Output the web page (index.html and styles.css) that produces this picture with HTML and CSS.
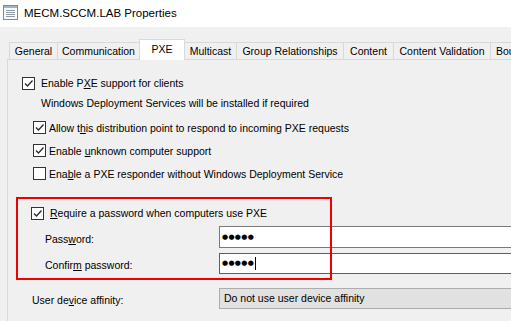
FILE: index.html
```html
<!DOCTYPE html>
<html>
<head>
<meta charset="utf-8">
<link rel="stylesheet" href="styles.css">
</head>
<body>
<div class="window">
  <div class="titlebar">
    <svg class="app-icon" width="15" height="15" viewBox="0 0 15 15">
      <rect x="0.5" y="0.5" width="14" height="14" fill="#fdfdfd" stroke="#7c8a99"/>
      <rect x="1" y="1" width="13" height="2" fill="#9fb4c8"/>
      <rect x="3" y="5" width="9" height="1" fill="#8e9aa6"/>
      <rect x="3" y="7" width="9" height="1" fill="#8e9aa6"/>
      <rect x="3" y="9" width="9" height="1" fill="#8e9aa6"/>
      <rect x="3" y="11" width="9" height="1" fill="#8e9aa6"/>
    </svg>
    <span class="title">MECM.SCCM.LAB Properties</span>
  </div>

  <div class="tabs">
    <div class="tab t-general">General</div>
    <div class="tab t-comm">Communication</div>
    <div class="tab t-pxe selected">PXE</div>
    <div class="tab t-multi">Multicast</div>
    <div class="tab t-group">Group Relationships</div>
    <div class="tab t-content">Content</div>
    <div class="tab t-cv">Content Validation</div>
    <div class="tab t-bound">Boundary Groups</div>
  </div>

  <div class="panel">
    <label class="row row-main">
      <span class="cb checked"><svg viewBox="0 0 11 11" width="11" height="11"><path d="M2 5.5 L4.5 8 L9.5 2.5" fill="none" stroke="#2b2b2b" stroke-width="1.3"/></svg></span>
      <span class="lbl">Enable P<u>X</u>E support for clients</span>
    </label>
    <div class="note">Windows Deployment Services will be installed if required</div>
    <label class="row row-sub">
      <span class="cb checked"><svg viewBox="0 0 11 11" width="11" height="11"><path d="M2 5.5 L4.5 8 L9.5 2.5" fill="none" stroke="#2b2b2b" stroke-width="1.3"/></svg></span>
      <span class="lbl">Allow t<u>h</u>is distribution point to respond to incoming PXE requests</span>
    </label>
    <label class="row row-sub">
      <span class="cb checked"><svg viewBox="0 0 11 11" width="11" height="11"><path d="M2 5.5 L4.5 8 L9.5 2.5" fill="none" stroke="#2b2b2b" stroke-width="1.3"/></svg></span>
      <span class="lbl">Enable <u>u</u>nknown computer support</span>
    </label>
    <label class="row row-sub">
      <span class="cb"></span>
      <span class="lbl">Ena<u>b</u>le a PXE responder without Windows Deployment Service</span>
    </label>

    <div class="pw-group">
      <label class="row row-pw">
        <span class="cb checked"><svg viewBox="0 0 11 11" width="11" height="11"><path d="M2 5.5 L4.5 8 L9.5 2.5" fill="none" stroke="#2b2b2b" stroke-width="1.3"/></svg></span>
        <span class="lbl"><u>R</u>equire a password when computers use PXE</span>
      </label>
      <div class="field">
        <span class="field-lbl">Pass<u>w</u>ord:</span>
        <div class="textbox"><span class="dots">●●●●●</span></div>
      </div>
      <div class="field field-confirm">
        <span class="field-lbl">Confir<u>m</u> password:</span>
        <div class="textbox focused"><span class="dots">●●●●●</span><span class="caret"></span></div>
      </div>
      <div class="highlight"></div>
    </div>

    <div class="field affinity">
      <span class="field-lbl">User de<u>v</u>ice affinity:</span>
      <div class="combo">Do not use user device affinity</div>
    </div>
  </div>
</div>
</body>
</html>
```

FILE: styles.css
```css
html, body {
  margin: 0;
  padding: 0;
  width: 511px;
  height: 321px;
  overflow: hidden;
  background: #f0f0f0;
}

.window {
  font-family: "Liberation Sans", Arial, sans-serif;
  font-size: 10.5px;
  color: #000;
  width: 511px;
  height: 321px;
  overflow: hidden;
}

u { text-decoration: underline; text-underline-offset: 1px; }

.titlebar {
  height: 27px;
  background: #fff;
  display: flex;
  align-items: center;
  padding-left: 3px;
  box-sizing: border-box;
  padding-bottom: 2px;
}

.app-icon { display: block; flex: none; }

.title {
  font-size: 11.5px;
  margin-left: 6px;
  color: #000;
}

.tabs {
  display: flex;
  align-items: flex-end;
  height: 20px;
  margin-top: 12px;
  padding-left: 9px;
  width: 700px;
}

.tab {
  box-sizing: border-box;
  flex: none;
  height: 17px;
  border: 1px solid #d9d9d9;
  border-bottom: none;
  margin-right: -1px;
  text-align: center;
  line-height: 14px;
  padding-top: 1px;
  white-space: nowrap;
  overflow: hidden;
  background: #f0f0f0;
}

.tab.selected {
  height: 21px;
  margin-bottom: -1px;
  background: #fff;
  position: relative;
  z-index: 1;
  padding-top: 2px;
}

.t-general { width: 49px; }
.t-comm { width: 83px; }
.t-pxe { width: 46px; }
.t-multi { width: 53px; }
.t-group { width: 108px; }
.t-content { width: 51px; }
.t-cv { width: 98px; }
.t-bound { width: 91px; text-align: left; padding-left: 5px; }

.panel {
  margin-left: 7px;
  width: 700px;
  height: 300px;
  border-top: 1px solid #d9d9d9;
  border-left: 1px solid #d9d9d9;
  box-sizing: border-box;
  padding-left: 8px;
  padding-top: 13px;
  display: flex;
  flex-direction: column;
  align-items: flex-start;
}

.row {
  display: flex;
  align-items: center;
  height: 23px;
}

.row-main { height: 20px; margin-left: 6px; gap: 6px; }
.row-sub { margin-left: 17px; gap: 3px; }

.note {
  margin-left: 25px;
  height: 20px;
  line-height: 20px;
  margin-bottom: 3px;
}

.cb {
  box-sizing: border-box;
  width: 13px;
  height: 13px;
  border: 1px solid #333;
  background: #fff;
  display: flex;
  align-items: center;
  justify-content: center;
  flex: none;
}

.cb svg { display: block; }

.lbl { white-space: nowrap; }

.pw-group {
  position: relative;
  margin-top: 12px;
  padding: 6px 0 6px 2px;
  width: 600px;
}

.row-pw { margin-left: 13px; gap: 6px; height: 20px; margin-bottom: 3px; }

.field {
  display: flex;
  align-items: center;
  height: 22px;
}

.field-confirm { margin-top: 5px; height: 21px; }

.field-lbl {
  width: 174px;
  padding-left: 27px;
  flex: none;
  padding-top: 3px;
  white-space: nowrap;
}

.textbox {
  box-sizing: border-box;
  width: 320px;
  height: 100%;
  background: #fff;
  border: 1px solid #7a7a7a;
  display: flex;
  align-items: center;
  padding-left: 2px;
}

.textbox.focused { border-color: #0078d7; }

.dots {
  font-family: "DejaVu Sans", sans-serif;
  font-size: 7px;
  letter-spacing: 0.3px;
  line-height: 1;
}

.caret {
  width: 1px;
  height: 13px;
  background: #000;
  margin-left: 1px;
}

.highlight {
  position: absolute;
  left: 0;
  top: 0;
  width: 316px;
  height: 83px;
  box-sizing: border-box;
  border: 2px solid #ee0000;
  pointer-events: none;
  z-index: 2;
}

.affinity {
  margin-top: 8px;
  height: 21px;
}

.affinity .field-lbl { width: 187px; padding-left: 16px; box-sizing: border-box; }
.affinity .field-lbl { width: 203px; }

.combo {
  box-sizing: border-box;
  width: 320px;
  height: 21px;
  background: #e1e1e1;
  border: 1px solid #adadad;
  line-height: 19px;
  padding-left: 4px;
  white-space: nowrap;
}
```
